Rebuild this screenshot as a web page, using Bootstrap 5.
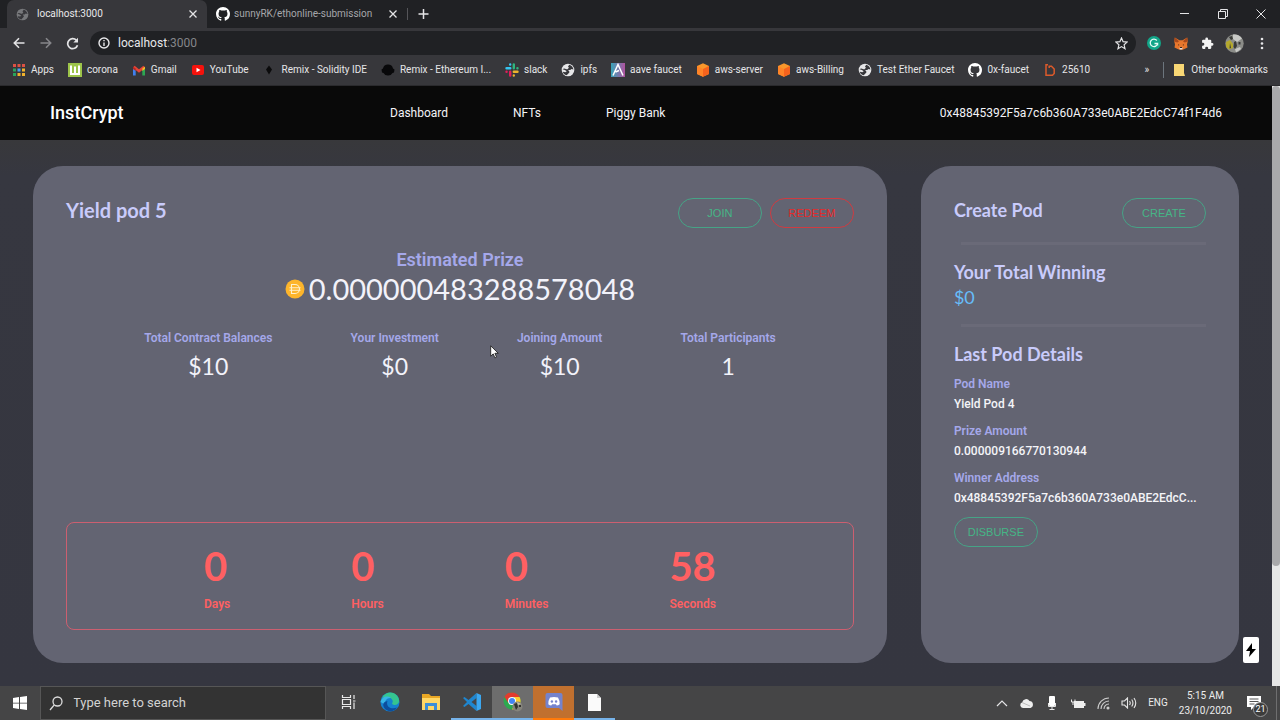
<!DOCTYPE html>
<html lang="en">
<head>
<meta charset="utf-8">
<meta name="viewport" content="width=device-width, initial-scale=1">
<title>InstCrypt</title>
<link href="https://cdn.jsdelivr.net/npm/bootstrap@5.3.0/dist/css/bootstrap.min.css" rel="stylesheet">
<style>
  body { font-family: Roboto, "Liberation Sans", sans-serif; font-size: 12px; line-height: 16px; background: #353640; color: #f4f4f8; }
  button { font-family: inherit; }
  svg { display: block; flex: none; }
  a { color: inherit; text-decoration: none; }
  .plain-btn { background: none; border: 0; padding: 0; color: #e4e4e6; display: flex; align-items: center; justify-content: center; }

  /* browser window */
  .tabstrip { background: #202124; height: 28px; padding-left: 7px; font-size: 10px; }
  .tab-item { width: 200px; height: 28px; padding: 0 9px; color: #a6a7ab; }
  .tab-item.current { background: #37373b; color: #e8e8ea; border-radius: 7px 7px 0 0; }
  .win-btn { width: 38px; height: 26px; }
  .toolbar { background: #37373b; height: 30px; padding: 0 5px; }
  .tool-btn { width: 27px; height: 26px; }
  .omnibox { background: #202124; height: 24px; border-radius: 12px; padding: 0 8px; font-size: 12px; color: #e8e8ea; }
  .omnibox .form-control { background: none; border: 0; padding: 0; font-size: 12px; line-height: 16px; color: #85868a; box-shadow: none; }
  .bookmarks { background: #37373b; height: 28px; padding: 0 12px 3px; gap: 14px; font-size: 10px; color: #e6e6e8; border-bottom: 1px solid #2a2a2d; }
  .bookmarks a { display: flex; align-items: center; gap: 5px; white-space: nowrap; }

  /* page */
  .viewport { background: linear-gradient(#38383b 54px, #363740 90px, #353640 100%); }
  .topbar { background: #090909; height: 54px; padding: 0 50px; }
  .brandname { font-size: 18px; line-height: 24px; font-weight: 500; color: #fff; }
  .topbar nav { gap: 65px; }
  .panels { display: grid; grid-template-columns: 51fr 19fr; gap: 34px; padding: 26px 33px 23px; }
  .panel { background: #636472; border-radius: 30px; padding: 32px 33px 33px; min-width: 0; }
  .lato { font-family: Lato, "Liberation Sans", sans-serif; }
  .title-lg { font-family: Lato, sans-serif; font-size: 20px; line-height: 24px; font-weight: 700; color: #c9cbfb; margin: 0; }
  .title-md { font-family: Lato, sans-serif; font-size: 18px; line-height: 24px; font-weight: 700; color: #c9cbfb; margin: 0; }
  .pill { width: 84px; height: 30px; border-radius: 15px; border: 1px solid #46a386; background: none; color: #46b586; font: 11px/16px "Liberation Sans", sans-serif; padding: 0; }
  .pill-red { border-color: #cf3b41; color: #e62a2a; }
  .tag { font-weight: 600; color: #a5a8ea; }
  .prize-tag { font-size: 18px; line-height: 24px; font-weight: 600; color: #a5a8ea; }
  .prize { font-size: 29px; line-height: 34px; color: #f2f2fa; }
  .stat { font-size: 23px; line-height: 32px; color: #f2f2fa; }
  .counter { border: 1px solid #cc5f70; border-radius: 8px; padding: 21px 16px 17px; color: #ff6062; font-weight: 600; }
  .count-num { font-size: 40px; line-height: 44px; font-weight: 700; }
  .rule { height: 3px; background: #6a6a78; margin: 14px 0 15px 7px; border: 0; opacity: 1; }
  .winning { font-size: 18px; line-height: 26px; color: #67bdfa; }
  .details { margin: 10px 0 0; }
  .details dt { font-weight: 600; color: #a5a8ea; line-height: 16px; }
  .details dd { font-weight: 500; line-height: 16px; margin: 4px 0 11px; }
  .scroll-track { width: 8px; background: #e6e6e6; flex: none; }
  .scroll-thumb { height: 80%; background: #a9a9ab; border-radius: 4px; }
  .bolt { position: absolute; right: 21px; bottom: 23px; width: 16px; height: 26px; background: #fff; border-radius: 2px; color: #000; }
  .pointer { position: absolute; left: 490px; top: 259px; }

  /* taskbar */
  .taskbar { background: #454546; height: 34px; color: #ececec; }
  .start { width: 40px; height: 34px; }
  .searchbox { width: 286px; background: #333; border: 1px solid #565656; padding: 0 8px; gap: 10px; }
  .searchbox .form-control { background: none; border: 0; padding: 0; font-size: 13px; line-height: 16px; color: #d2d2d2; box-shadow: none; }
  .searchbox .form-control::placeholder { color: #d2d2d2; opacity: 1; }
  .apps { gap: 0; margin-left: 2px; }
  .app { width: 41px; height: 34px; border-bottom: 2px solid transparent; }
  .app.open { border-bottom-color: #76b3ea; }
  .app.front { background: #6d6d6d; }
  .app.alert-app { background: #c0702f; border-bottom-color: #ff7a0a; }
  .tray { font-size: 10px; gap: 11px; padding-right: 3px; }
  .note-count { position: absolute; left: 6px; top: 6px; width: 15px; height: 15px; border-radius: 50%; border: 1px solid #999; background: #3c3c3c; font-size: 9px; line-height: 13px; text-align: center; color: #fff; }
</style>
</head>
<body>
<svg width="0" height="0" class="position-absolute" aria-hidden="true">
  <defs>
    <symbol id="cat" viewBox="0 0 16 16"><path fill="currentColor" d="M8 0C3.58 0 0 3.58 0 8c0 3.54 2.29 6.53 5.47 7.59.4.07.55-.17.55-.38 0-.19-.01-.82-.01-1.49-2.01.37-2.53-.49-2.69-.94-.09-.23-.48-.94-.82-1.13-.28-.15-.68-.52-.01-.53.63-.01 1.08.58 1.23.82.72 1.21 1.87.87 2.33.66.07-.52.28-.87.51-1.07-1.78-.2-3.64-.89-3.64-3.95 0-.87.31-1.59.82-2.15-.08-.2-.36-1.02.08-2.12 0 0 .67-.21 2.2.82.64-.18 1.32-.27 2-.27s1.36.09 2 .27c1.53-1.04 2.2-.82 2.2-.82.44 1.1.16 1.92.08 2.12.51.56.82 1.27.82 2.15 0 3.07-1.87 3.75-3.65 3.95.29.25.54.73.54 1.48 0 1.07-.01 1.93-.01 2.2 0 .21.15.46.55.38A8.01 8.01 0 0 0 16 8c0-4.42-3.58-8-8-8z"/></symbol>
    <symbol id="globe" viewBox="0 0 16 16"><circle cx="8" cy="8" r="7.200" fill="currentColor"/><path fill="#37373b" d="M1.800 7C4 5 6 7.500 7.500 7.200L9 5.500 8 4l1.500-2C12 2.500 14 5 14.200 7.500L12 6.800 10.500 8H8.200l1.600 2.200L9 11.500 6.500 14C4 13.500 2.500 12 2 10l3 .6L6.500 9.500 4.500 8z"/></symbol>
    <symbol id="cube" viewBox="0 0 14 14"><path fill="#f9972b" d="M7 .3 13 3v8L7 13.700 1 11V3z"/><path fill="#f6631d" d="M13 3v8l-6 2.700V6z"/><path fill="#ff8427" d="M1 3l6 3v7.700L1 11z"/></symbol>
    <symbol id="cross" viewBox="0 0 10 10"><path d="M1.500 1.500l7 7m0-7l-7 7" stroke="currentColor" stroke-width="1.300"/></symbol>
  </defs>
</svg>

<div class="d-flex flex-column min-vh-100">
  <header>
    <div class="tabstrip d-flex align-items-center">
      <div class="tab-item current d-flex align-items-center">
        <svg width="13" height="13" style="color:#77787b"><use href="#globe"/></svg>
        <span class="ms-2 flex-grow-1">localhost:3000</span>
        <button class="plain-btn" aria-label="Close tab"><svg width="10" height="10"><use href="#cross"/></svg></button>
      </div>
      <div class="tab-item d-flex align-items-center">
        <svg width="14" height="14" class="text-white"><use href="#cat"/></svg>
        <span class="ms-1 flex-grow-1 text-nowrap">sunnyRK/ethonline-submission</span>
        <button class="plain-btn" aria-label="Close tab"><svg width="10" height="10"><use href="#cross"/></svg></button>
      </div>
      <div class="vr my-2"></div>
      <button class="plain-btn ms-2" aria-label="New tab"><svg width="14" height="12" viewBox="0 0 14 12"><path d="M7.500 1v10M2.500 6h10" stroke="currentColor" stroke-width="1.500"/></svg></button>
      <div class="d-flex ms-auto">
        <button class="plain-btn win-btn" aria-label="Minimize"><svg width="10" height="10"><path d="M0 4.500h9" stroke="currentColor"/></svg></button>
        <button class="plain-btn win-btn" aria-label="Restore"><svg width="10" height="10" fill="none" stroke="currentColor"><path d="M.5 2.500h7v7h-7zM2.500 2.500v-2h7v7h-2"/></svg></button>
        <button class="plain-btn win-btn" aria-label="Close"><svg width="10" height="10"><path d="M.5.5l9 9m0-9l-9 9" stroke="currentColor"/></svg></button>
      </div>
    </div>
    <div class="toolbar d-flex align-items-center">
      <button class="plain-btn tool-btn" aria-label="Back"><svg width="12" height="12" fill="none" stroke="currentColor" stroke-width="1.600"><path d="M11.500 6H1.500M6 1.300L1.300 6 6 10.700"/></svg></button>
      <button class="plain-btn tool-btn" aria-label="Forward" style="color:#86868a"><svg width="12" height="12" fill="none" stroke="currentColor" stroke-width="1.600"><path d="M.5 6h10M6 1.300L10.700 6 6 10.700"/></svg></button>
      <button class="plain-btn tool-btn" aria-label="Reload"><svg width="13" height="13" viewBox="0 0 13 13" fill="none" stroke="currentColor" stroke-width="1.700"><path d="M11.500 8.200A5 5 0 1 1 10.300 3.200"/><path d="M12 .8v4.700H7.300z" fill="currentColor" stroke="none"/></svg></button>
      <div class="omnibox d-flex align-items-center flex-grow-1 ms-1">
        <svg width="12" height="12" fill="none" stroke="#e8e8ea" stroke-width="1.400"><circle cx="6" cy="6" r="5"/><path d="M6 5.400V9M6 3v1.300"/></svg>
        <label for="url" class="ps-2">localhost</label>
        <input id="url" class="form-control" value=":3000">
        <button class="plain-btn" aria-label="Bookmark"><svg width="13" height="13" viewBox="0 0 13 13"><path d="M6.500 1l1.600 3.700 4 .4-3 2.700.9 3.900-3.500-2.100L3 11.700l.9-3.900-3-2.700 4-.4z" fill="none" stroke="currentColor" stroke-width="1.200"/></svg></button>
      </div>
      <button class="plain-btn tool-btn ms-1" aria-label="Grammar"><svg width="14" height="14"><circle cx="7" cy="7" r="7" fill="#12a588"/><path d="M9.800 4.500A3.700 3.700 0 1 0 10.600 7.500H7.500M10.600 7.500v2" fill="none" stroke="#e4fbf5" stroke-width="1.300"/></svg></button>
      <button class="plain-btn tool-btn" aria-label="Wallet"><svg width="14" height="13" viewBox="0 0 14 13"><path fill="#e8762c" d="M.8.4L5.400 3.200h3.200L13.200.4l.5 4.200-.7 3 .5 3-3.200 1.500-1.700.7H5.400l-1.700-.7L.5 10.600l.5-3-.7-3z"/><path fill="#a8481b" d="M.8.4l4.300 3.800L3.200 5.400.3 4.600zM13.200.4L8.900 4.200l1.900 1.200 2.900-.8z"/><path fill="#ddd" d="M5.400 10.800h3.200l-.4 1.700H5.800z"/><path fill="#3b2315" d="M4 7.200l1.500.9-1.300.4zM10 7.200l-1.500.9 1.300.4zM6 10h2v1H6z"/></svg></button>
      <button class="plain-btn tool-btn" aria-label="Extensions"><svg width="13" height="13" viewBox="0 0 24 24"><path fill="#f4f4f4" d="M20.500 11H19V7a2 2 0 0 0-2-2h-4V3.500a2.500 2.500 0 0 0-5 0V5H4a2 2 0 0 0-2 2v3.800h1.500a2.700 2.700 0 0 1 0 5.400H2V20a2 2 0 0 0 2 2h3.800v-1.500a2.700 2.700 0 0 1 5.400 0V22H17a2 2 0 0 0 2-2v-4h1.500a2.500 2.500 0 0 0 0-5z"/></svg></button>
      <button class="plain-btn tool-btn" aria-label="Profile"><svg width="19" height="19" viewBox="0 0 19 19"><circle cx="9.500" cy="9.500" r="9.200" fill="#8b8c88"/><path fill="#c8c9c6" d="M8 .6a9.200 9.200 0 0 1 9 4L12 8 8 5zM10 15l5-2 1 2-5 3.500z"/><path fill="#b5a92c" d="M1 8L5 6l3 4v4l-4 1.500L1.200 13z"/><path fill="#3a3b38" d="M4 3l3-1 1 3-2 1zM9 8l2-1 1 5-2 3-1.500-2zM13.500 8h2v2.500h-2zM5 9l1 5-1.500.5z"/></svg></button>
      <button class="plain-btn tool-btn" aria-label="Menu"><svg width="4" height="13" fill="#e8e8ea"><circle cx="2" cy="2" r="1.300"/><circle cx="2" cy="6.500" r="1.300"/><circle cx="2" cy="11" r="1.300"/></svg></button>
    </div>
    <nav class="bookmarks d-flex align-items-center" aria-label="Bookmarks">
      <a href="#"><svg width="14" height="12" viewBox="0 0 14 12"><g fill="#dd5144"><path d="M1 0h3v3H1zM5.500 0h3v3h-3zM10 0h3v3h-3z"/></g><path fill="#28a45c" d="M1 4.500h3v3H1z"/><path fill="#4aa0ee" d="M5.500 4.500h3v3h-3z"/><path fill="#efb22d" d="M10 4.500h3v3h-3zM10 9h3v3h-3zM5.500 9h3v3h-3z"/><path fill="#28a45c" d="M1 9h3v3H1z"/></svg>Apps</a>
      <a href="#"><svg width="14" height="14"><path fill="#9dc44a" d="M0 0h14v14H0z"/><path d="M3 2.500v8.500h8V2.500M7 3.500V11" fill="none" stroke="#fff" stroke-width="2"/></svg>corona</a>
      <a href="#"><svg width="14" height="11" viewBox="0 0 14 11"><path fill="#3f80ee" d="M1 2v8.500h2.700V5z"/><path fill="#2da652" d="M13 2v8.500h-2.700V5z"/><path d="M1.800 1.800L7 6l5.200-4.200" fill="none" stroke="#e64437" stroke-width="2.600"/><path fill="#b9281f" d="M1 1.500l2.700 2V6L1 4z"/><path fill="#f4b921" d="M13 1.500l-2.700 2V6L13 4z"/></svg>Gmail</a>
      <a href="#"><svg width="14" height="14"><rect x="1" y="2" width="12" height="10" rx="2" fill="#f5120c"/><path fill="#fff" d="M5.500 4.800L9.500 7l-4 2.200z"/></svg>YouTube</a>
      <a href="#"><svg width="14" height="14"><path fill="#0b0b0c" d="M6 2.500l3 4-3 5-3-5z"/></svg>Remix - Solidity IDE</a>
      <a href="#"><svg width="14" height="14"><path fill="#08080a" d="M7 1.500a5 5 0 0 1 5 4l1.500 1-.5 3-1.500.5A5 5 0 0 1 7 12.500 5 5 0 0 1 2.500 10L1 9.500l-.5-3L2 5.500a5 5 0 0 1 5-4z"/></svg>Remix - Ethereum I...</a>
      <a href="#"><svg width="14" height="14" fill="none" stroke-width="2.400" stroke-linecap="round"><path stroke="#36c5f0" d="M5.200 1.500v.1M1.500 5.200h3.800"/><path stroke="#2eb67d" d="M8.800 1.500v3.700M12.400 5.200h.1"/><path stroke="#ecb22e" d="M8.800 8.800h3.700M8.800 12.400v.1"/><path stroke="#e01e5a" d="M5.200 8.800v3.700M1.500 8.800h.1"/></svg>slack</a>
      <a href="#"><svg width="14" height="14"><use href="#globe"/></svg>ipfs</a>
      <a href="#"><svg width="14" height="14"><defs><linearGradient id="av" x2="1" y2="0"><stop stop-color="#38a5b9"/><stop offset="1" stop-color="#b1529f"/></linearGradient></defs><path fill="url(#av)" d="M0 0h14v14H0z"/><path d="M2 12.500L7 1.500l5 11M4.500 9L8 7.500" fill="none" stroke="#fff" stroke-width="1.500"/></svg>aave faucet</a>
      <a href="#"><svg width="14" height="14"><use href="#cube"/></svg>aws-server</a>
      <a href="#"><svg width="14" height="14"><use href="#cube"/></svg>aws-Billing</a>
      <a href="#"><svg width="14" height="14"><use href="#globe"/></svg>Test Ether Faucet</a>
      <a href="#"><svg width="14" height="14" class="text-white"><use href="#cat"/></svg>0x-faucet</a>
      <a href="#"><svg width="14" height="14"><path d="M5 1.700H3V12.200h6.500L11.200 10.500V6L8.500 3.200H6.200V5" fill="none" stroke="#dc5a2b" stroke-width="1.500"/></svg>25610</a>
      <button class="plain-btn ms-auto" aria-label="More bookmarks">»</button>
      <a href="#" class="border-start border-secondary ps-2"><svg width="14" height="14"><path fill="#f8d775" d="M2 1h10v9l1 3H2z"/></svg>Other bookmarks</a>
    </nav>
  </header>

  <main class="viewport d-flex flex-grow-1 position-relative">
    <div class="flex-grow-1 d-flex flex-column">
      <div class="topbar d-flex align-items-center justify-content-between">
        <a href="#" class="brandname">InstCrypt</a>
        <nav class="d-flex me-2" aria-label="Main"><a href="#">Dashboard</a><a href="#">NFTs</a><a href="#">Piggy Bank</a></nav>
        <span>0x48845392F5a7c6b360A733e0ABE2EdcC74f1F4d6</span>
      </div>
      <div class="panels flex-grow-1">
        <section class="panel d-flex flex-column">
          <div class="d-flex justify-content-between">
            <h1 class="title-lg">Yield pod 5</h1>
            <div class="d-flex gap-2"><button class="pill">JOIN</button><button class="pill pill-red">REDEEM</button></div>
          </div>
          <div class="text-center pt-3 mt-1">
            <div class="prize-tag">Estimated Prize</div>
            <div class="prize lato d-flex justify-content-center align-items-center gap-1">
              <svg width="20" height="20"><circle cx="10" cy="10" r="9.500" fill="#fdb52b"/><path d="M6.500 5.500H10a4.500 4.500 0 0 1 0 9H6.500zM4.500 8.700h11M4.500 11.300h11" fill="none" stroke="#fff0cc" stroke-width="1.100"/></svg>
              <span>0.000000483288578048</span>
            </div>
          </div>
          <div class="d-flex justify-content-evenly text-center mt-4">
            <div><div class="tag">Total Contract Balances</div><div class="stat lato mt-1">$10</div></div>
            <div><div class="tag">Your Investment</div><div class="stat lato mt-1">$0</div></div>
            <div><div class="tag">Joining Amount</div><div class="stat lato mt-1">$10</div></div>
            <div><div class="tag">Total Participants</div><div class="stat lato mt-1">1</div></div>
          </div>
          <div class="counter d-flex justify-content-evenly mt-auto">
            <div><div class="count-num lato">0</div><div class="mt-2">Days</div></div>
            <div><div class="count-num lato">0</div><div class="mt-2">Hours</div></div>
            <div><div class="count-num lato">0</div><div class="mt-2">Minutes</div></div>
            <div><div class="count-num lato">58</div><div class="mt-2">Seconds</div></div>
          </div>
        </section>
        <aside class="panel">
          <div class="d-flex justify-content-between">
            <h2 class="title-md">Create Pod</h2>
            <button class="pill">CREATE</button>
          </div>
          <hr class="rule">
          <h2 class="title-md">Your Total Winning</h2>
          <div class="winning lato">$0</div>
          <hr class="rule">
          <h2 class="title-md">Last Pod Details</h2>
          <dl class="details">
            <dt>Pod Name</dt><dd>Yield Pod 4</dd>
            <dt>Prize Amount</dt><dd>0.000009166770130944</dd>
            <dt>Winner Address</dt><dd>0x48845392F5a7c6b360A733e0ABE2EdcC...</dd>
          </dl>
          <button class="pill">DISBURSE</button>
        </aside>
      </div>
    </div>
    <div class="scroll-track"><div class="scroll-thumb"></div></div>
    <button class="plain-btn bolt" aria-label="Build status"><svg width="12" height="16" viewBox="0 0 12 16"><path d="M7 1L1 9h4l-1 6 7-8H7z"/></svg></button>
    <svg class="pointer" width="10" height="14" viewBox="0 0 10 14"><path d="M.7.8v10.400l2.500-2.300 1.700 4 1.700-.7-1.700-3.900h3.400z" fill="#fff" stroke="#222" stroke-width=".9"/></svg>
  </main>

  <footer class="taskbar d-flex align-items-stretch">
    <button class="plain-btn start" aria-label="Start"><svg width="14" height="14" fill="#fff"><path d="M0 2l6-.9v5.600H0zM7 1l7-1v6.700H7zM0 7.500h6V13l-6-.9zM7 7.500h7V14l-7-1z"/></svg></button>
    <label class="searchbox d-flex align-items-center">
      <svg width="14" height="15" fill="none" stroke="#ddd" stroke-width="1.300"><circle cx="8.500" cy="5.500" r="4.500"/><path d="M5.300 8.800L1 14"/></svg>
      <input class="form-control" placeholder="Type here to search" aria-label="Type here to search">
    </label>
    <div class="apps d-flex">
    <button class="plain-btn app" aria-label="Task view"><svg width="15" height="14" fill="none" stroke="#e8e8e8" stroke-width="1.200"><path d="M1.500 0v2.500h8V0M1.500 14v-2.500h8V14M1.500 4.500h8v5h-8zM13 0v4M13 7.500V14M12 6h2.500"/></svg></button>
    <button class="plain-btn app" aria-label="Edge"><svg width="20" height="20" viewBox="0 0 20 20"><circle cx="10" cy="10" r="9.600" fill="#1582cf"/><path fill="#35c58f" d="M2 6C5-.5 14-1.500 18 5c2.500 4.500.5 8-3.500 8-2 0-3-1-2-2.500C14 7 8 3 2 6z"/><path fill="#37b6e6" d="M.6 10C1.500 5 7 3 11 6c-4-.5-7 3-5.500 7z"/><path fill="#0c4e9d" d="M7.500 9c-2 5 3 9 9.500 6.500-3 5-10 5-13 0-2-4 0-6 3.500-6.500z"/></svg></button>
    <button class="plain-btn app" aria-label="File Explorer"><svg width="20" height="18" viewBox="0 0 20 18"><path fill="#e9a724" d="M1 1h7l2 2h9v5H1z"/><path fill="#ffd766" d="M1 5h18v12H1z"/><path fill="#3c8ed7" d="M4 10h12v7h-3v-4H7v4H4z"/></svg></button>
    <button class="plain-btn app open" aria-label="Code editor"><svg width="20" height="20" viewBox="0 0 20 20"><path fill="#1f86cf" d="M14.500 1L6.500 8 2.500 5 1 6l4 4-4 4 1.500 1 4-3 8 7V14L9.500 10l5-4z"/><path fill="#3ba7f0" d="M14.500 1L19 3v14l-4.500 2z"/></svg></button>
    <button class="plain-btn app open front" aria-label="Chrome"><svg width="20" height="20" viewBox="0 0 20 20"><circle cx="9" cy="9" r="8.500" fill="#2da94f"/><path fill="#e33b2e" d="M1.500 5A8.500 8.500 0 0 1 16.600 5H9L5.500 11z"/><path fill="#fccf2d" d="M16.600 5A8.500 8.500 0 0 1 9 17.500L12.500 11 11 5z"/><circle cx="9" cy="9" r="4" fill="#fff"/><circle cx="9" cy="9" r="3" fill="#4285f4"/><circle cx="14.500" cy="14.500" r="5" fill="#85847c"/><path fill="#33332f" d="M11 12l3-1 1 4-2 3zM16 13h2v2h-2z"/><path fill="#c9c6a5" d="M14 10l4 2-3 1z"/></svg></button>
    <button class="plain-btn app alert-app" aria-label="Discord"><svg width="18" height="18" viewBox="0 0 18 18"><path fill="#7583cc" d="M2.500 0h13A2 2 0 0 1 17.500 2v16l-3.500-3H2.500a2 2 0 0 1-2-2V2a2 2 0 0 1 2-2z"/><path fill="#fff" d="M5 4.500Q9 3.500 13 4.500 15 8 14.700 11.200q-1.500 1.300-3 1.300l-.8-1.200H7.100l-.8 1.200q-1.500 0-3-1.300Q3 8 5 4.500z"/><circle cx="6.900" cy="8.500" r="1.200" fill="#7583cc"/><circle cx="11.100" cy="8.500" r="1.200" fill="#7583cc"/></svg></button>
    <button class="plain-btn app open" aria-label="Document"><svg width="15" height="19"><path fill="#fafafa" d="M1 1h9l4 4v13H1z"/><path fill="#ccc" d="M10 1v4h4z"/></svg></button>
    </div>

    <div class="tray d-flex align-items-center ms-auto">
      <button class="plain-btn" aria-label="Hidden icons"><svg width="12" height="8"><path d="M1 7l5-5 5 5" fill="none" stroke="currentColor" stroke-width="1.200"/></svg></button>
      <svg width="15" height="10"><path fill="#eee" d="M4 10a3 3 0 0 1-.8-5.800A4 4 0 0 1 10.500 3a3.600 3.600 0 0 1 1 7z"/><path d="M3 4.500l8 3.500" stroke="#bbb"/></svg>
      <svg width="15" height="14"><rect x="4" y="0" width="6" height="10" rx="1" fill="#fff"/><path d="M3.500 7v3.500h7V7M7 10.500V13M4.500 13.500h5" fill="none" stroke="#e6e6e6"/></svg>
      <svg width="15" height="11"><path fill="#eee" d="M3 3h10v7H3zM13 5h1.500v3H13z"/><path d="M.5 1.500v2.500h3.500V1.500M2 4v3" stroke="#eee" fill="none"/></svg>
      <svg width="13" height="13" fill="none" stroke="#ccc" stroke-width="1.100"><path d="M1 12A11 11 0 0 1 12 1M4 12a8 8 0 0 1 8-8M7 12a5 5 0 0 1 5-5"/><circle cx="11" cy="11" r="1" fill="#fff"/></svg>
      <svg width="16" height="12" fill="none" stroke="#e6e6e6" stroke-width="1.100"><path d="M1 4h2.500L6.500 1v10L3.500 8H1zM8.500 4q1.500 2 0 4M10.700 2.500q2.500 3.500 0 7M13 1q3.500 5 0 10"/></svg>
      <span>ENG</span>
      <div class="text-center lh-base"><div>5:15 AM</div><div>23/10/2020</div></div>
      <button class="plain-btn position-relative mx-1" aria-label="Notifications"><svg width="14" height="14"><path fill="#fff" d="M0 0h14v11H7l-3 3v-3H0z"/><path d="M2.500 3h9M2.500 5.500h9M2.500 8h5" stroke="#555"/></svg><span class="note-count">21</span></button>
      <div class="vr"></div>
    </div>
  </footer>
</div>
<script src="https://cdn.jsdelivr.net/npm/bootstrap@5.3.0/dist/js/bootstrap.bundle.min.js"></script>
</body>
</html>
